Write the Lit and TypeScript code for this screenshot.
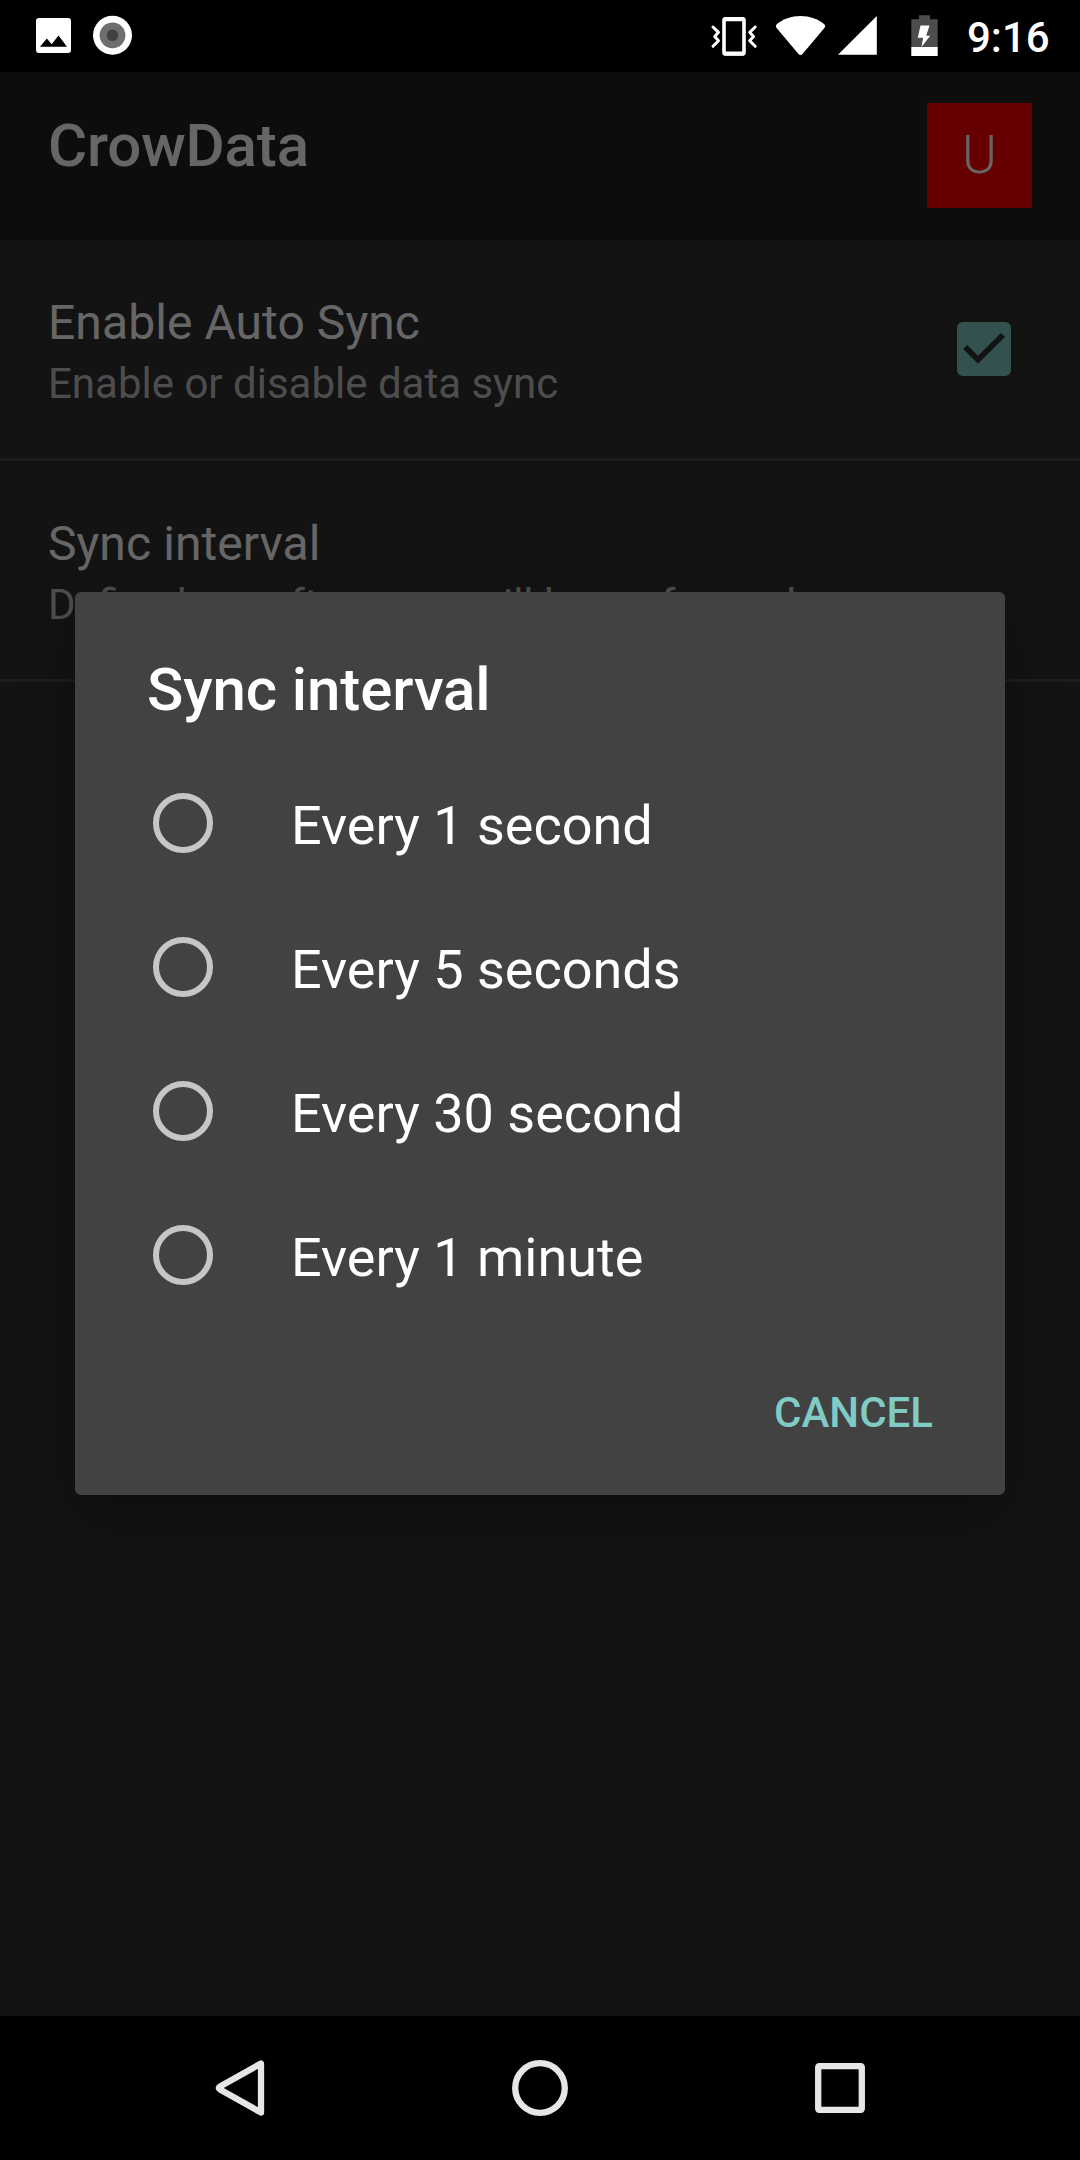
import { LitElement, html, css, svg } from "lit";
import { customElement, property } from "lit/decorators.js";

@customElement("status-bar")
class StatusBar extends LitElement {
  static styles = css`
    :host {
      display: flex;
      justify-content: space-between;
      height: 72px;
      background: #000;
      color: #fff;
    }
    .icons {
      display: block;
      flex: none;
    }
    .right {
      display: flex;
    }
    .time {
      font-size: 42px;
      font-weight: 500;
      line-height: 75px;
      width: 113px;
      white-space: nowrap;
    }
  `;

  render() {
    return html`
      <svg class="icons" width="150" height="72" viewBox="0 0 150 72">
        <path
          fill="#fff"
          fill-rule="evenodd"
          d="M39 18h29a3 3 0 0 1 3 3v29a3 3 0 0 1-3 3H39a3 3 0 0 1-3-3V21a3 3 0 0 1 3-3zM40 46.7h27L58.5 35.500l-6.800 8.700-4.900-5.800z"
        />
        <circle cx="112.500" cy="35.300" r="19.500" fill="#fff" />
        <circle cx="112.500" cy="35.300" r="12.900" fill="#6e6e6e" />
        <circle cx="112.500" cy="35.300" r="5.800" fill="#404040" />
      </svg>
      <div class="right">
        <svg class="icons" width="257" height="72" viewBox="710 0 257 72">
          <rect x="724" y="18.700" width="20" height="35.300" rx="1.500" fill="none" stroke="#fff" stroke-width="3.600" />
          <path d="M724 19.200h20M724 53.500h20" stroke="#fff" stroke-width="4" />
          <path
            d="M713 27l5.500 5.300-3.800 4.200 3.800 4.200-5.500 5.600M755.200 27l-5.500 5.300 3.800 4.200-3.800 4.200 5.500 5.600"
            fill="none"
            stroke="#fff"
            stroke-width="3"
            stroke-linecap="round"
            stroke-linejoin="round"
          />
          <path
            fill="#fff"
            d="M777 24C783 19 791.500 16 800.500 16S818 19 824 24c1.400 1.200 1.400 2.700.400 4L802.500 54c-1.200 1.300-2.800 1.300-4 0L776.600 28c-1-1.300-1-2.800.400-4z"
          />
          <path fill="#fff" d="M838 54.700h38.800V16z" />
          <path fill="#4d4d4d" d="M919 15.200h11v4h7.700V47h-26.400V19.200h7.700z" />
          <path fill="#fff" d="M911.300 47h26.400v8.900h-26.400zM920.500 25.500h9l-3.300 10.200h4L921.500 47l1.600-9.200h-5.300z" />
        </svg>
        <span class="time">9:16</span>
      </div>
    `;
  }
}

@customElement("preference-row")
class PreferenceRow extends LitElement {
  @property() label = "";
  @property() summary = "";
  @property({ type: Boolean }) checked = false;

  static styles = css`
    :host {
      display: flex;
      justify-content: space-between;
      box-sizing: border-box;
      height: 221px;
      padding: 51px 69px 0 48px;
      border-bottom: 3px solid #494949;
      white-space: nowrap;
    }
    .label {
      font-size: 48px;
      letter-spacing: 0.08px;
      line-height: 64px;
      color: #fff;
    }
    .summary {
      font-size: 42px;
      line-height: 57px;
      color: #c1c1c1;
    }
    .check {
      display: block;
      margin-top: 31px;
    }
  `;

  render() {
    return html`
      <div>
        <div class="label">${this.label}</div>
        <div class="summary">${this.summary}</div>
      </div>
      ${this.checked
        ? html`<svg class="check" width="54" height="54" viewBox="0 0 54 54">
            <rect width="54" height="54" rx="6" fill="#80cbc4" />
            <path d="M6.200 27l3.900-4L21 33.800 44 11l4 3.900L21 41.800z" fill="#303030" />
          </svg>`
        : ""}
    `;
  }
}

@customElement("choice-dialog")
class ChoiceDialog extends LitElement {
  @property() heading = "";
  @property({ attribute: false }) options: string[] = [];

  static styles = css`
    :host {
      display: flex;
      flex-direction: column;
      box-sizing: border-box;
      width: 930px;
      height: 903px;
      padding-top: 63px;
      border-radius: 6px;
      background: #424242;
      color: #fff;
      box-shadow: 0 22px 54px rgba(0, 0, 0, 0.25);
      white-space: nowrap;
    }
    .heading {
      margin: 0 0 26px 72px;
      font-size: 60px;
      font-weight: 500;
      letter-spacing: -0.1px;
      line-height: 70px;
    }
    .option {
      display: flex;
      align-items: center;
      gap: 78px;
      height: 144px;
      padding-left: 78px;
    }
    .radio {
      box-sizing: border-box;
      width: 60px;
      height: 60px;
      border: 6px solid #c6c6c6;
      border-radius: 50%;
    }
    .text {
      padding-top: 5px;
      font-size: 54px;
      line-height: 64px;
    }
    .actions {
      display: flex;
      flex: 1;
      align-items: center;
      justify-content: flex-end;
      padding: 3px 72px 0 0;
      font-size: 42px;
      font-weight: 500;
      color: #80cbc4;
    }
  `;

  render() {
    return html`
      <div class="heading">${this.heading}</div>
      ${this.options.map(
        (o) => html`<div class="option"><span class="radio"></span><span class="text">${o}</span></div>`
      )}
      <div class="actions"><span>CANCEL</span></div>
    `;
  }
}

@customElement("nav-bar")
class NavBar extends LitElement {
  static styles = css`
    :host {
      display: flex;
      justify-content: center;
      height: 144px;
      background: #000;
    }
    .key {
      width: 300px;
      height: 144px;
    }
  `;

  private key(shape: unknown) {
    return html`<svg class="key" viewBox="0 0 300 144" fill="none" stroke="#e6e6e6" stroke-width="6.300" stroke-linejoin="round">
      ${shape}
    </svg>`;
  }

  render() {
    return html`
      ${this.key(svg`<path d="M171 47.500v49L130 73.500q-2.500-1.500 0-3z" />`)}
      ${this.key(svg`<circle cx="150" cy="72" r="24.800" />`)}
      ${this.key(svg`<rect x="128.200" y="50.200" width="43.600" height="43.600" rx="1" />`)}
    `;
  }
}

@customElement("app-root")
export class AppRoot extends LitElement {
  static styles = css`
    :host {
      display: flex;
      flex-direction: column;
      width: 1080px;
      height: 2160px;
      overflow: hidden;
      background: #000;
      font-family: Roboto, "Liberation Sans", sans-serif;
    }
    .screen {
      position: relative;
      flex: 1;
      background: #303030;
    }
    .toolbar {
      display: flex;
      justify-content: space-between;
      align-items: flex-start;
      box-sizing: border-box;
      height: 168px;
      padding: 31px 48px 0;
      background: #212121;
      color: #fff;
      box-shadow: 0 3px 10px rgba(0, 0, 0, 0.16);
    }
    .title {
      margin-top: 8px;
      font-size: 60px;
      font-weight: 500;
      letter-spacing: -0.15px;
      line-height: 70px;
    }
    .avatar {
      width: 105px;
      height: 105px;
      background: #f00;
      font-size: 53px;
      font-weight: 300;
      line-height: 105px;
      text-align: center;
    }
    .scrim {
      position: absolute;
      inset: 0;
      box-sizing: border-box;
      padding: 520px 75px 0;
      background: rgba(0, 0, 0, 0.6);
    }
  `;

  private options = ["Every 1 second", "Every 5 seconds", "Every 30 second", "Every 1 minute"];

  render() {
    return html`
      <status-bar></status-bar>
      <div class="screen">
        <div class="toolbar">
          <div class="title">CrowData</div>
          <div class="avatar">U</div>
        </div>
        <preference-row label="Enable Auto Sync" summary="Enable or disable data sync" checked></preference-row>
        <preference-row label="Sync interval" summary="Define how often sync will be performed"></preference-row>
        <div class="scrim">
          <choice-dialog heading="Sync interval" .options=${this.options}></choice-dialog>
        </div>
      </div>
      <nav-bar></nav-bar>
    `;
  }
}
